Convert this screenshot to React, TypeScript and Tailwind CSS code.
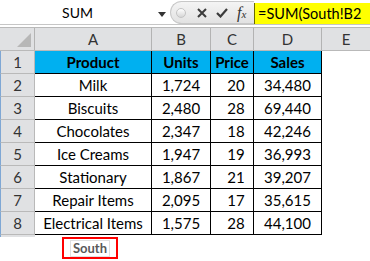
// sheet preview: formula bar + small sales table
const colW = ["w-[117px]", "w-[59px]", "w-[43px]", "w-[68px]"];
const align = ["justify-center", "justify-center", "justify-center pl-[8px]", "justify-center"];

const rows: string[][] = [
  ["Milk", "1,724", "20", "34,480"],
  ["Biscuits", "2,480", "28", "69,440"],
  ["Chocolates", "2,347", "18", "42,246"],
  ["Ice Creams", "1,947", "19", "36,993"],
  ["Stationary", "1,867", "21", "39,207"],
  ["Repair Items", "2,095", "17", "35,615"],
  ["Electrical Items", "1,575", "28", "44,100"],
];

function FormulaBar() {
  return (
    <div className="flex h-[25px] border-b border-[#c6c6c6] bg-white">
      {/* name box */}
      <div className="relative flex w-[170px] items-center">
        <span className="w-[155px] text-center text-[14px] text-black">SUM</span>
        <svg width="8" height="5" viewBox="0 0 8 5" className="absolute left-[158px] top-[12px]">
          <path d="M0 0h8L4 5z" fill="#333" />
        </svg>
      </div>
      {/* cancel / enter / fx pill */}
      <div className="mt-[1px] flex w-[84px] items-center rounded-l-full border border-r-0 border-[#c8c8c8] bg-gradient-to-b from-[#f4f4f4] to-[#e2e2e2] pl-[5px]">
        <div className="h-[10px] w-[10px] rounded-full border border-[#c4c4c4] bg-gradient-to-b from-[#ffffff] to-[#d6d6d6]" />
        <svg width="10" height="10" viewBox="0 0 10 10" className="ml-[11px]">
          <path d="M1 1l8 8M9 1l-8 8" stroke="#3b3b3b" strokeWidth="2" />
        </svg>
        <svg width="12" height="10" viewBox="0 0 12 10" className="ml-[9px]">
          <path d="M1 5l3.5 3.5L11 1" stroke="#3b3b3b" strokeWidth="2.2" fill="none" />
        </svg>
        <span className="ml-[9px] font-['Liberation_Serif'] text-[16px] italic leading-none text-[#333]">
          f<span className="text-[11px]">x</span>
        </span>
      </div>
      <div className="mt-[3px] flex flex-1 items-center border-l border-[#6b6b00] bg-[#ffff00] pl-[3px] text-[14.5px] text-black">
        =SUM(South!B2
      </div>
    </div>
  );
}

export default function App() {
  return (
    <div className="h-[261px] w-[370px] overflow-hidden bg-white font-['Lato'] text-black">
      <FormulaBar />
      <div className="h-[2px] bg-white" />

      {/* column headers */}
      <div className="flex h-[24px] border-y border-[#b9b9b9] bg-[#e0e1e3]">
        <div className="relative w-[35px] border-r border-[#b3b3b3]">
          <svg width="14" height="14" viewBox="0 0 14 14" className="absolute bottom-[3px] right-[3px]">
            <path d="M14 0v14H0z" fill="#b7b7b7" />
          </svg>
        </div>
        {["A", "B", "C", "D"].map((c, i) => (
          <div
            key={c}
            className={`${colW[i]} flex items-center justify-center border-r border-[#b3b3b3] text-[15px] text-[#333]`}
          >
            {c}
          </div>
        ))}
        <div className="flex flex-1 items-center justify-center text-[15px] text-[#333]">E</div>
      </div>

      {/* data rows */}
      <div className="flex flex-col">
        <div className="flex h-[23px]">
          <div className="flex w-[35px] items-center justify-center border-r border-b border-l border-[#b9b9b9] border-l-[#7fa7d4] bg-[#e0e1e3] text-[15px] text-[#333]">
            1
          </div>
          {["Product", "Units", "Price", "Sales"].map((h, i) => (
            <div
              key={h}
              className={`${colW[i]} flex items-center justify-center border-r border-b border-black bg-[#00b0f0] text-[15px] font-bold`}
            >
              {h}
            </div>
          ))}
        </div>
        {rows.map((r, ri) => (
          <div key={r[0]} className="flex h-[23px]">
            <div className="flex w-[35px] items-center justify-center border-r border-b border-l border-[#b9b9b9] border-l-[#7fa7d4] bg-[#e0e1e3] text-[15px] text-[#333]">
              {ri + 2}
            </div>
            {r.map((v, i) => (
              <div
                key={i}
                className={`${colW[i]} ${align[i]} relative flex items-center border-r border-b border-black text-[15px]`}
              >
                {v}
                {ri === 0 && i === 1 && (
                  <div className="absolute inset-[-1px] border border-dashed border-black" />
                )}
              </div>
            ))}
          </div>
        ))}
        <div className="h-[2px] w-[35px] border-l border-[#7fa7d4] bg-[#e0e1e3]" />
      </div>

      {/* sheet tab */}
      <div className="flex pl-[62px]">
        <div className="flex h-[22px] w-[56px] items-center justify-center border-2 border-[#ff0000] bg-white">
          <span className="border border-[#e0e0e0] px-[2px] text-[13px] font-bold leading-[15px] text-[#595959]">
            South
          </span>
        </div>
      </div>
    </div>
  );
}
